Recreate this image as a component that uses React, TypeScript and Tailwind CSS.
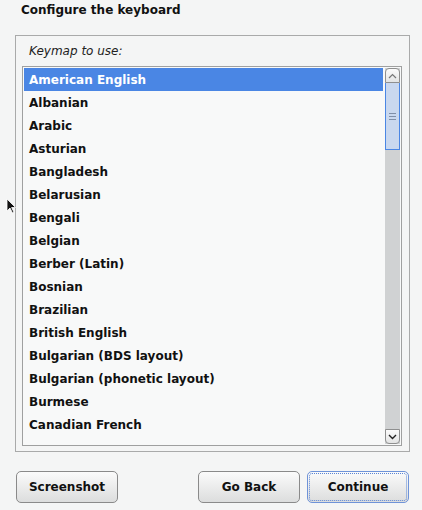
import React from 'react';

const keymaps = [
  'American English',
  'Albanian',
  'Arabic',
  'Asturian',
  'Bangladesh',
  'Belarusian',
  'Bengali',
  'Belgian',
  'Berber (Latin)',
  'Bosnian',
  'Brazilian',
  'British English',
  'Bulgarian (BDS layout)',
  'Bulgarian (phonetic layout)',
  'Burmese',
  'Canadian French',
];

const font = { fontFamily: '"DejaVu Sans", sans-serif' };

const Btn = ({ label, focus, className }: { label: string; focus?: boolean; className?: string }) => (
  <button
    className={
      'h-[32px] w-[102px] rounded-[5px] border bg-gradient-to-b from-[#fbfbfb] to-[#dcdddd] text-[12px] font-bold text-[#111] ' +
      (focus ? 'border-[#6f93d8] outline-dotted outline-1 outline-offset-[-3px] outline-[#5b86d6]' : 'border-[#8a8a8a]') +
      ' ' +
      (className ?? '')
    }
  >
    {label}
  </button>
);

export default function App() {
  return (
    <div className="relative h-[510px] w-[422px] overflow-hidden bg-[#f4f5f5] text-[#111]" style={font}>
      {/* Title */}
      <h1 className="pl-[21px] pt-[2px] text-[12px] font-bold leading-[17px]">Configure the keyboard</h1>

      {/* Frame */}
      <div className="ml-[15px] mt-[16px] h-[417px] w-[395px] border border-[#a9aaaa] px-[6px] pt-[5px]">
        <p className="pl-[7px] text-[12px] italic leading-[20px] text-[#222]">Keymap to use:</p>
        <div className="mt-[5px] flex h-[380px] w-[380px] border border-[#9fa0a0] bg-[#f8f9f9] p-[1px]">
          <ul className="flex-1 pr-[2px]">
            {keymaps.map((k, i) => (
              <li
                key={k}
                className={
                  'h-[23px] pl-[5px] pt-px text-[12px] font-bold leading-[22px] ' +
                  (i === 0 ? 'bg-[#4a86e4] text-white' : '')
                }
              >
                {k}
              </li>
            ))}
          </ul>
          {/* Scrollbar */}
          <div className="flex w-[15px] flex-col bg-[#d3d5d6]">
            <div className="flex h-[15px] items-center justify-center rounded-t-[4px] border border-[#8e8f8f] bg-gradient-to-b from-[#fbfbfb] to-[#e3e4e4]">
              <svg width="9" height="6" viewBox="0 0 9 6">
                <path d="M1 5 L4.5 1.5 L8 5" fill="none" stroke="#777" strokeWidth="1.2" />
              </svg>
            </div>
            <div className="flex h-[67px] flex-col items-center justify-center gap-[2px] border-x border-b border-[#4a86e4] bg-[#c9d8ef]">
              <div className="h-px w-[7px] bg-[#7f8fa8]" />
              <div className="h-px w-[7px] bg-[#7f8fa8]" />
              <div className="h-px w-[7px] bg-[#7f8fa8]" />
            </div>
            <div className="flex-1 bg-[#d0d2d3]" />
            <div className="flex h-[15px] items-center justify-center rounded-b-[4px] border border-[#8e8f8f] bg-gradient-to-b from-[#fbfbfb] to-[#e3e4e4]">
              <svg width="9" height="6" viewBox="0 0 9 6">
                <path d="M1 1 L4.5 4.5 L8 1" fill="none" stroke="#222" strokeWidth="1.4" />
              </svg>
            </div>
          </div>
        </div>
      </div>

      {/* Buttons */}
      <div className="mt-[19px] flex pl-[16px] pr-[13px]">
        <Btn label="Screenshot" />
        <div className="flex-1" />
        <Btn label="Go Back" />
        <Btn label="Continue" focus className="ml-[7px]" />
      </div>

      {/* Mouse pointer */}
      <svg className="absolute left-[6px] top-[198px]" width="12" height="16" viewBox="0 0 12 16">
        <path d="M1 1 L1 13 L4 10 L6.5 15 L8 14.3 L5.6 9.5 L9.5 9.5 Z" fill="#111" stroke="#fff" strokeWidth="0.8" />
      </svg>
    </div>
  );
}
